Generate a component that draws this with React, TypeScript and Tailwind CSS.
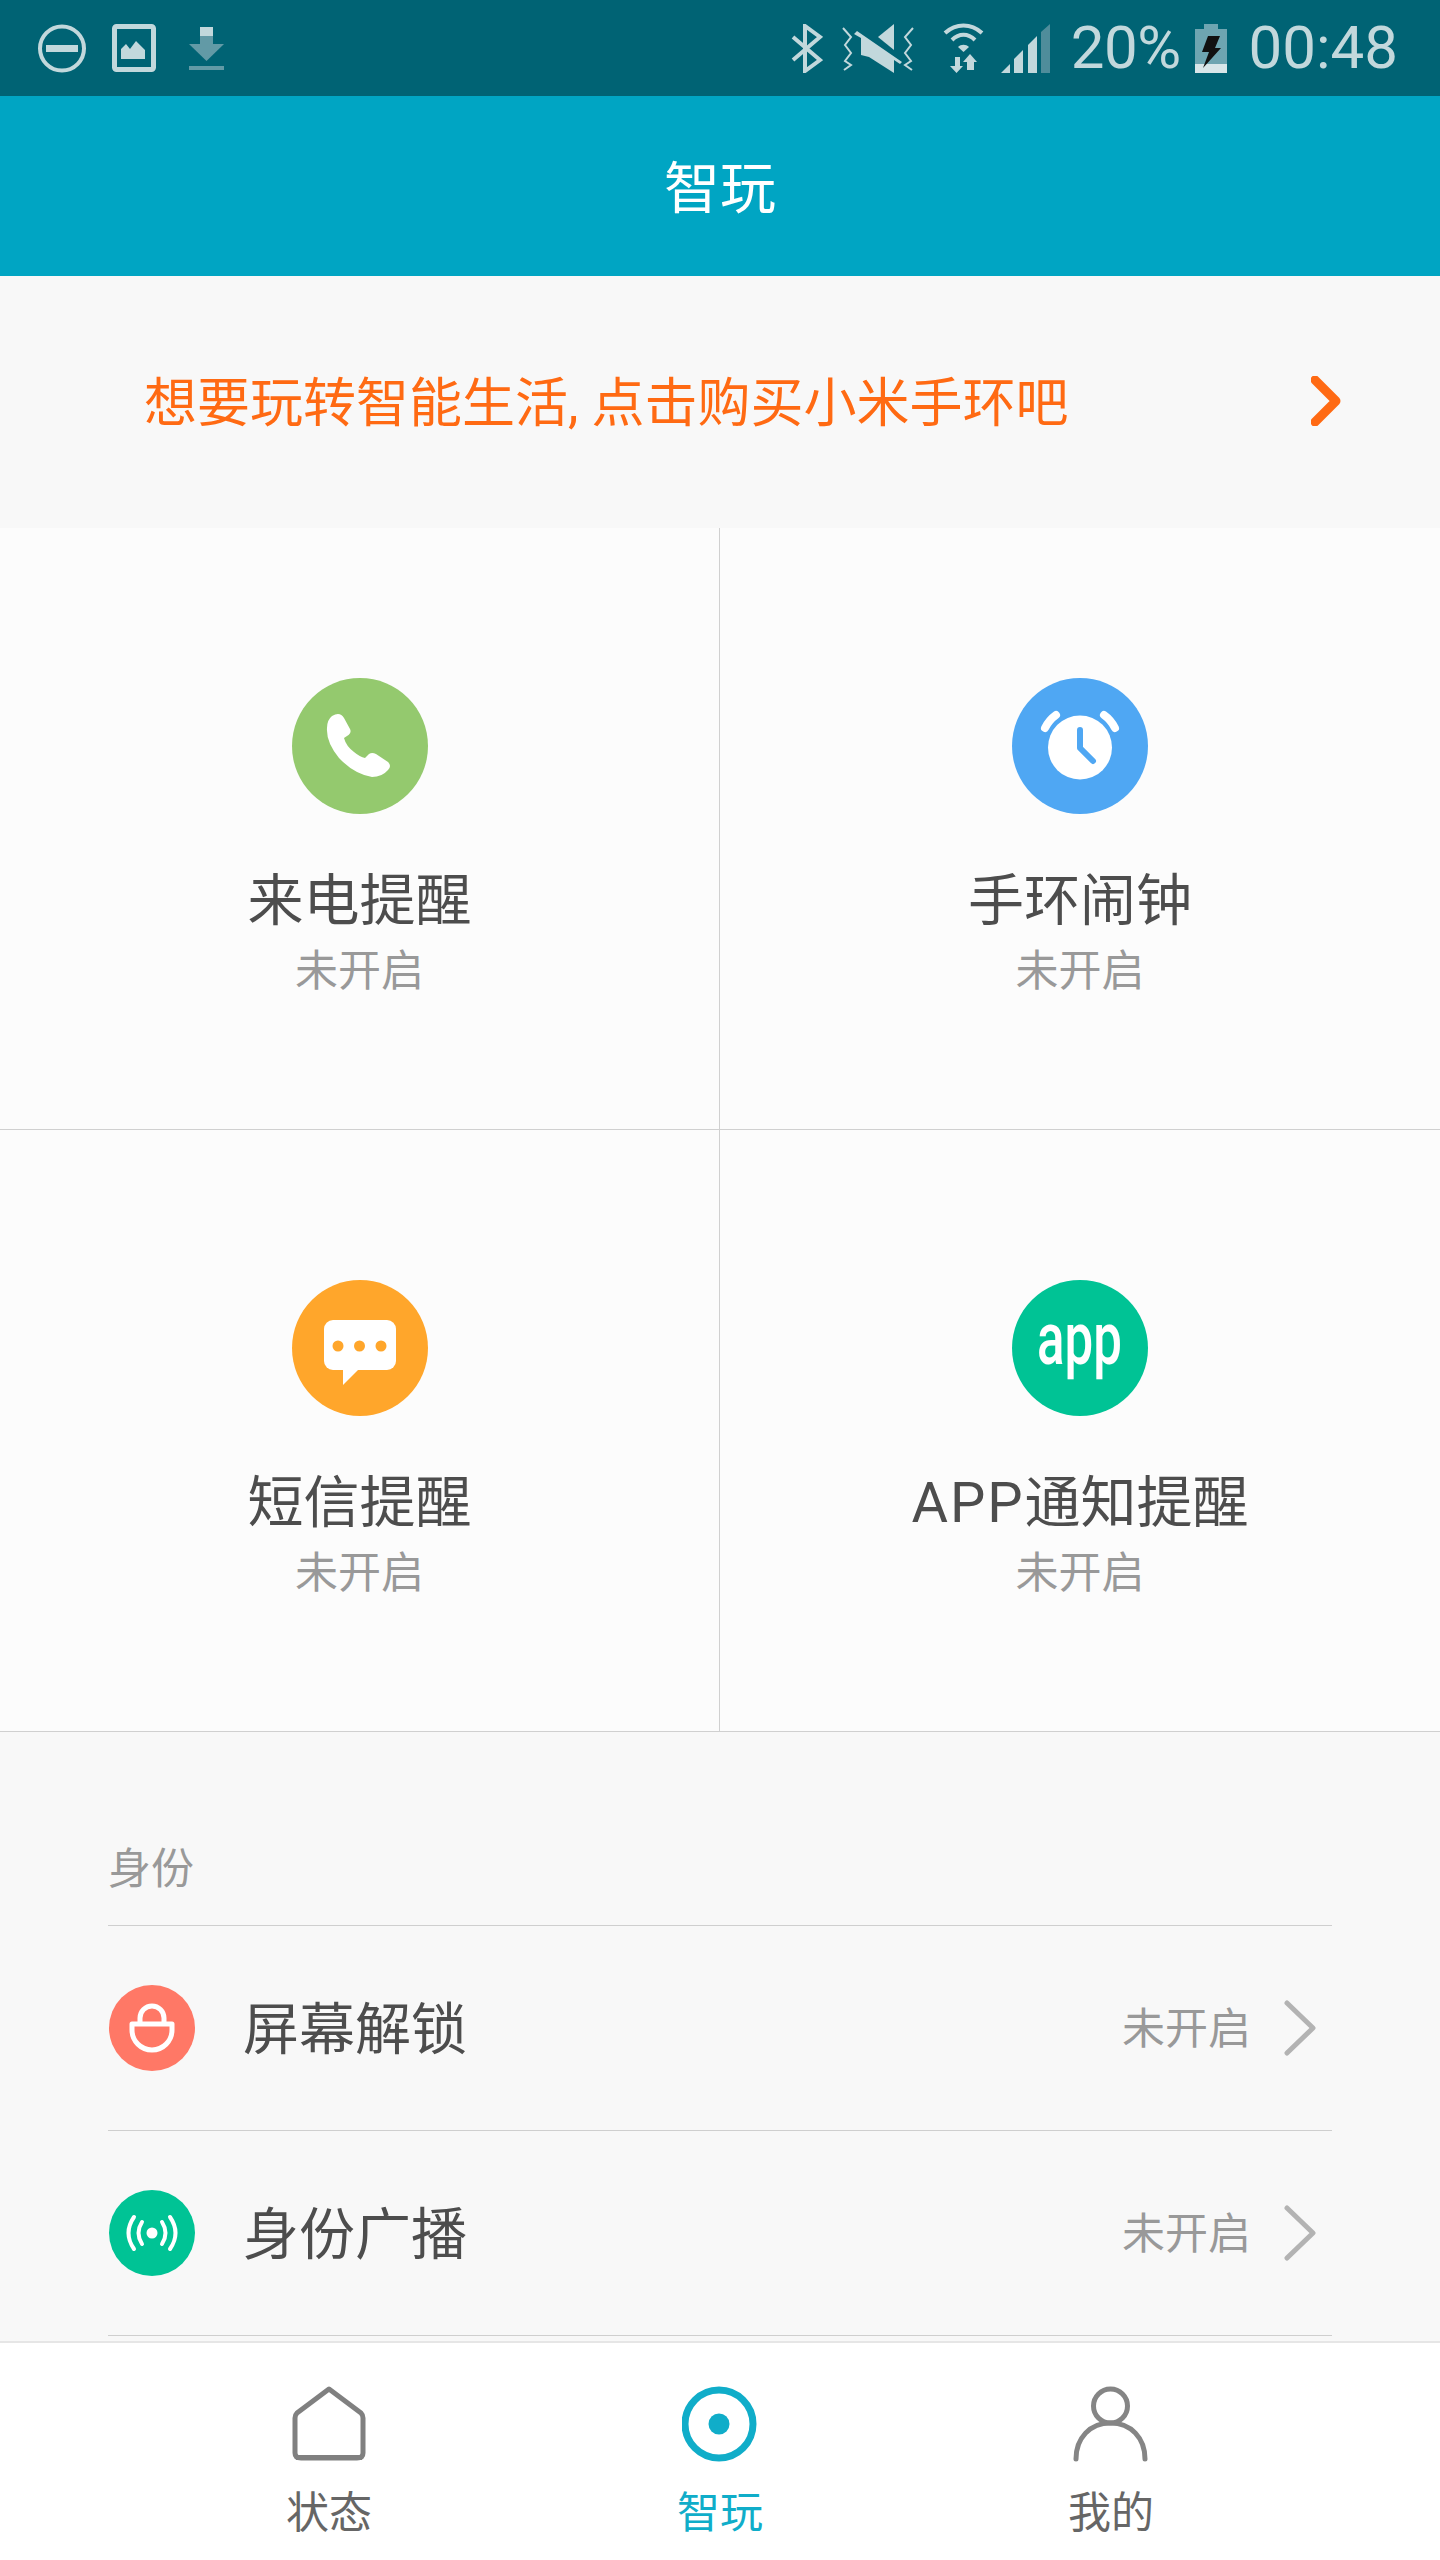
const statusIcon = "text-[#c2d8dc]";

function StatusBar() {
  return (
    <div className="flex h-[96px] items-center bg-[#006374] pl-[38px] pr-[42px]">
      {/* do not disturb */}
      <svg width="48" height="49" viewBox="0 0 48 49" className={statusIcon}>
        <circle cx="24" cy="24.5" r="22" fill="none" stroke="currentColor" strokeWidth="4" />
        <rect x="8" y="21" width="32" height="7" fill="currentColor" />
      </svg>
      {/* picture */}
      <svg width="44" height="48" viewBox="0 0 44 48" className={`ml-[26px] ${statusIcon}`}>
        <rect x="2.5" y="2.5" width="39" height="43" rx="2" fill="none" stroke="currentColor" strokeWidth="5" />
        <path d="M9 35V25L14 20L18 25L24 17L33 26V35Z" fill="currentColor" />
      </svg>
      {/* download */}
      <svg width="35" height="43" viewBox="0 0 35 43" className="ml-[33px]">
        <rect x="11" y="0" width="13" height="9" fill="#c2d8dc" />
        <rect x="11" y="9" width="13" height="9" fill="#629aa6" />
        <path d="M0 17H35L17.5 34Z" fill="#629aa6" />
        <rect x="0" y="39" width="35" height="4" fill="#629aa6" />
      </svg>

      <div className="flex-1" />

      {/* bluetooth */}
      <svg width="32" height="49" viewBox="0 0 32 49" className={statusIcon}>
        <path d="M2 13L29 36L14 47V2L29 13L2 36" fill="none" stroke="currentColor" strokeWidth="4" />
      </svg>
      {/* vibrate + mute */}
      <svg width="72" height="49" viewBox="0 0 72 49" className={`ml-[19px] ${statusIcon}`}>
        <path d="M1 4L9 13L3 21L9 29L3 37L9 41L2 46" fill="none" stroke="currentColor" strokeWidth="2" />
        <path d="M71 4L63 13L69 21L63 29L69 37L63 41L70 46" fill="none" stroke="currentColor" strokeWidth="2" />
        <path d="M52 0V26L36 13Z" fill="currentColor" />
        <path d="M19 14L52 49V36L58 40L60 38L15 7L12 10L19 14V31L27 33L52 49Z" fill="currentColor" />
      </svg>
      {/* wifi with arrows */}
      <svg width="41" height="50" viewBox="0 0 41 50" className={`ml-[29px] ${statusIcon}`}>
        <path d="M2 10C13 0 28 0 39 10" fill="none" stroke="currentColor" strokeWidth="4" />
        <path d="M9 17C16 10 25 10 32 17" fill="none" stroke="currentColor" strokeWidth="4" />
        <path d="M15 24C18 21 23 21 26 24L20.5 29Z" fill="currentColor" />
        <path d="M12 34H17V43H20L13.5 50L7 43H12Z" fill="currentColor" />
        <path d="M27 31L34 39H31V47H24V39H20Z" fill="currentColor" />
      </svg>
      {/* signal */}
      <svg width="49" height="49" viewBox="0 0 49 49" className="ml-[17px]">
        <path d="M0 49L9 40V49Z" fill="#c2d8dc" />
        <path d="M13 49V35L22 26V49Z" fill="#c2d8dc" />
        <path d="M27 49V21L36 12V49Z" fill="#c2d8dc" />
        <path d="M40 49V8L49 0V49Z" fill="#4f8d9b" />
      </svg>
      <span className="ml-[21px] font-['Roboto',sans-serif] text-[60px] leading-none font-normal tracking-[-0.5px] text-[#c2d8dc]">
        20%
      </span>
      {/* battery */}
      <svg width="32" height="49" viewBox="0 0 32 49" className="ml-[14px]">
        <rect x="9" y="0" width="14" height="5" fill="#6ea5b1" />
        <rect x="0" y="5" width="32" height="35" fill="#6ea5b1" />
        <rect x="0" y="40" width="32" height="9" fill="#d8e6e9" />
        <path d="M13 12H25L20 24H26L8 44L14 28H7Z" fill="#111" />
      </svg>
      <span className="ml-[22px] font-['Roboto',sans-serif] text-[60px] leading-none font-normal text-[#c2d8dc]">
        00:48
      </span>
    </div>
  );
}

function PhoneIcon() {
  return (
    <svg width="136" height="136" viewBox="0 0 136 136">
      <circle cx="68" cy="68" r="68" fill="#94c96e" />
      <path
        d="M40 38Q48 33 52 40L58 51Q60 55 55 58L52 60Q54 68 62 74Q68 79 73 80L77 76Q80 74 84 76L96 84Q100 88 96 92Q90 99 80 99Q62 96 47 80Q34 64 35 50Q35 42 40 38Z"
        fill="#fff"
      />
    </svg>
  );
}

function AlarmIcon() {
  return (
    <svg width="136" height="136" viewBox="0 0 136 136">
      <circle cx="68" cy="68" r="68" fill="#4fa7f3" />
      <circle cx="68" cy="69.5" r="32" fill="#fff" />
      <path d="M33 50Q37 42 44 37M103 50Q99 42 92 37" fill="none" stroke="#fff" strokeWidth="8" strokeLinecap="round" />
      <path d="M68 52V70L81 83" fill="none" stroke="#4fa7f3" strokeWidth="6" strokeLinecap="round" strokeLinejoin="round" />
    </svg>
  );
}

function MessageIcon() {
  return (
    <svg width="136" height="136" viewBox="0 0 136 136">
      <circle cx="68" cy="68" r="68" fill="#ffa62b" />
      <rect x="32" y="40" width="72" height="50" rx="9" fill="#fff" />
      <path d="M51 88V105L66 90Z" fill="#fff" />
      <circle cx="46" cy="66" r="5.5" fill="#ffa62b" />
      <circle cx="67.5" cy="66" r="5.5" fill="#ffa62b" />
      <circle cx="89" cy="66" r="5.5" fill="#ffa62b" />
    </svg>
  );
}

function AppIcon() {
  return (
    <svg width="136" height="136" viewBox="0 0 136 136">
      <circle cx="68" cy="68" r="68" fill="#00c395" />
      <text
        transform="translate(25 84) scale(0.69 1)"
        fill="#fff"
        fontFamily="Roboto, sans-serif"
        fontWeight="500"
        fontSize="74"
      >
        app
      </text>
    </svg>
  );
}

function LockIcon() {
  return (
    <svg width="86" height="86" viewBox="0 0 86 86">
      <circle cx="43" cy="43" r="43" fill="#ff7866" />
      <path d="M23 39H63V45A20 20 0 0 1 23 45Z" fill="none" stroke="#fff" strokeWidth="5" strokeLinejoin="round" />
      <path d="M31 39V33A12 12 0 0 1 55 33V39" fill="none" stroke="#fff" strokeWidth="5" />
    </svg>
  );
}

function BroadcastIcon() {
  return (
    <svg width="86" height="86" viewBox="0 0 86 86">
      <circle cx="43" cy="43" r="43" fill="#00c395" />
      <circle cx="43" cy="43" r="5.5" fill="#fff" />
      <path
        d="M33 32Q26 43 33 54M53 32Q60 43 53 54M25 27Q14 43 25 59M61 27Q72 43 61 59"
        fill="none"
        stroke="#fff"
        strokeWidth="4"
        strokeLinecap="round"
      />
    </svg>
  );
}

function Card({ icon, title, last }: { icon: React.ReactNode; title: React.ReactNode; last?: boolean }) {
  return (
    <div className={`flex h-[602px] flex-col items-center border-b border-[#d0d0d0] pt-[150px] ${last ? "" : "border-r"}`}>
      {icon}
      <div className="mt-[52px] text-[56px] leading-[70px] text-[#4d4d4d]">{title}</div>
      <div className="mt-[7px] text-[43px] leading-[56px] text-[#999]">未开启</div>
    </div>
  );
}

function Row({ icon, title }: { icon: React.ReactNode; title: string }) {
  return (
    <div className="flex h-[205px] items-center border-b border-[#cfcfcf] pl-px">
      {icon}
      <div className="ml-[48px] flex-1 pt-[4px] text-[56px] leading-[70px] text-[#4d4d4d]">{title}</div>
      <div className="pt-[3px] text-[43px] text-[#999]">未开启</div>
      <svg width="32" height="56" viewBox="0 0 32 56" className="mr-[16px] ml-[33px]">
        <path d="M3 3L29 28L3 53" fill="none" stroke="#b3b3b3" strokeWidth="5" strokeLinecap="round" strokeLinejoin="round" />
      </svg>
    </div>
  );
}

export default function App() {
  return (
    <div className="flex h-[2560px] w-[1440px] flex-col overflow-hidden bg-[#f8f8f8] font-['Roboto','Noto_Sans_CJK_SC',sans-serif]">
      <StatusBar />
      <div className="flex h-[180px] items-center justify-center bg-[#00a5c3] pt-[5px] text-[56px] text-white">智玩</div>

      <div className="flex h-[252px] items-center justify-between pr-[99px] pl-[144px]">
        <span className="pt-[5px] text-[53px] text-[#ff6a13]">想要玩转智能生活, 点击购买小米手环吧</span>
        <svg width="30" height="50" viewBox="0 0 30 50" className="mb-[2px]">
          <path d="M4 4L25 25L4 46" fill="none" stroke="#ff6a13" strokeWidth="9" strokeLinecap="round" strokeLinejoin="round" />
        </svg>
      </div>

      <div className="grid grid-cols-2 bg-[#fcfcfc]">
        <Card icon={<PhoneIcon />} title="来电提醒" />
        <Card icon={<AlarmIcon />} title="手环闹钟" last />
        <Card icon={<MessageIcon />} title="短信提醒" />
        <Card
          icon={<AppIcon />}
          title={
            <>
              <span className="tracking-[2px]">APP</span>通知提醒
            </>
          }
          last
        />
      </div>

      <div className="min-h-0 flex-1 overflow-hidden px-[108px]">
        <div className="flex h-[194px] items-end border-b border-[#cfcfcf] pb-[28px] text-[43px] leading-[56px] text-[#999]">
          身份
        </div>
        <Row icon={<LockIcon />} title="屏幕解锁" />
        <Row icon={<BroadcastIcon />} title="身份广播" />
      </div>

      <div className="flex h-[219px] justify-center border-t-2 border-[#e6e6e6] bg-white">
        <NavItem label="状态" icon={<HomeIcon />} />
        <NavItem label="智玩" active icon={<PlayIcon />} />
        <NavItem label="我的" icon={<UserIcon />} />
      </div>
    </div>
  );
}

function NavItem({ label, icon, active }: { label: string; icon: React.ReactNode; active?: boolean }) {
  return (
    <div className="flex w-[391px] flex-col items-center pt-[43px]">
      {icon}
      <div className={`mt-[23px] text-[43px] leading-[56px] ${active ? "text-[#10adc9]" : "text-[#666]"}`}>{label}</div>
    </div>
  );
}

function HomeIcon() {
  return (
    <svg width="76" height="76" viewBox="0 0 76 76">
      <path d="M38 3L70 27Q72 29 72 32V67Q72 72 66 72H10Q4 72 4 67V32Q4 29 6 27Z" fill="none" stroke="#808080" strokeWidth="5" strokeLinejoin="round" />
      <rect x="5" y="69" width="66" height="5" fill="#808080" />
    </svg>
  );
}

function PlayIcon() {
  return (
    <svg width="76" height="76" viewBox="0 0 76 76">
      <circle cx="37" cy="38" r="34" fill="none" stroke="#10adc9" strokeWidth="7" />
      <circle cx="37" cy="38" r="10.5" fill="#10adc9" />
    </svg>
  );
}

function UserIcon() {
  return (
    <svg width="76" height="76" viewBox="0 0 76 76">
      <circle cx="37.5" cy="20" r="17" fill="none" stroke="#858585" strokeWidth="5" />
      <path d="M3 73C3 52 17 37 37.5 37C58 37 72 52 72 73" fill="none" stroke="#858585" strokeWidth="5" strokeLinecap="round" />
    </svg>
  );
}
